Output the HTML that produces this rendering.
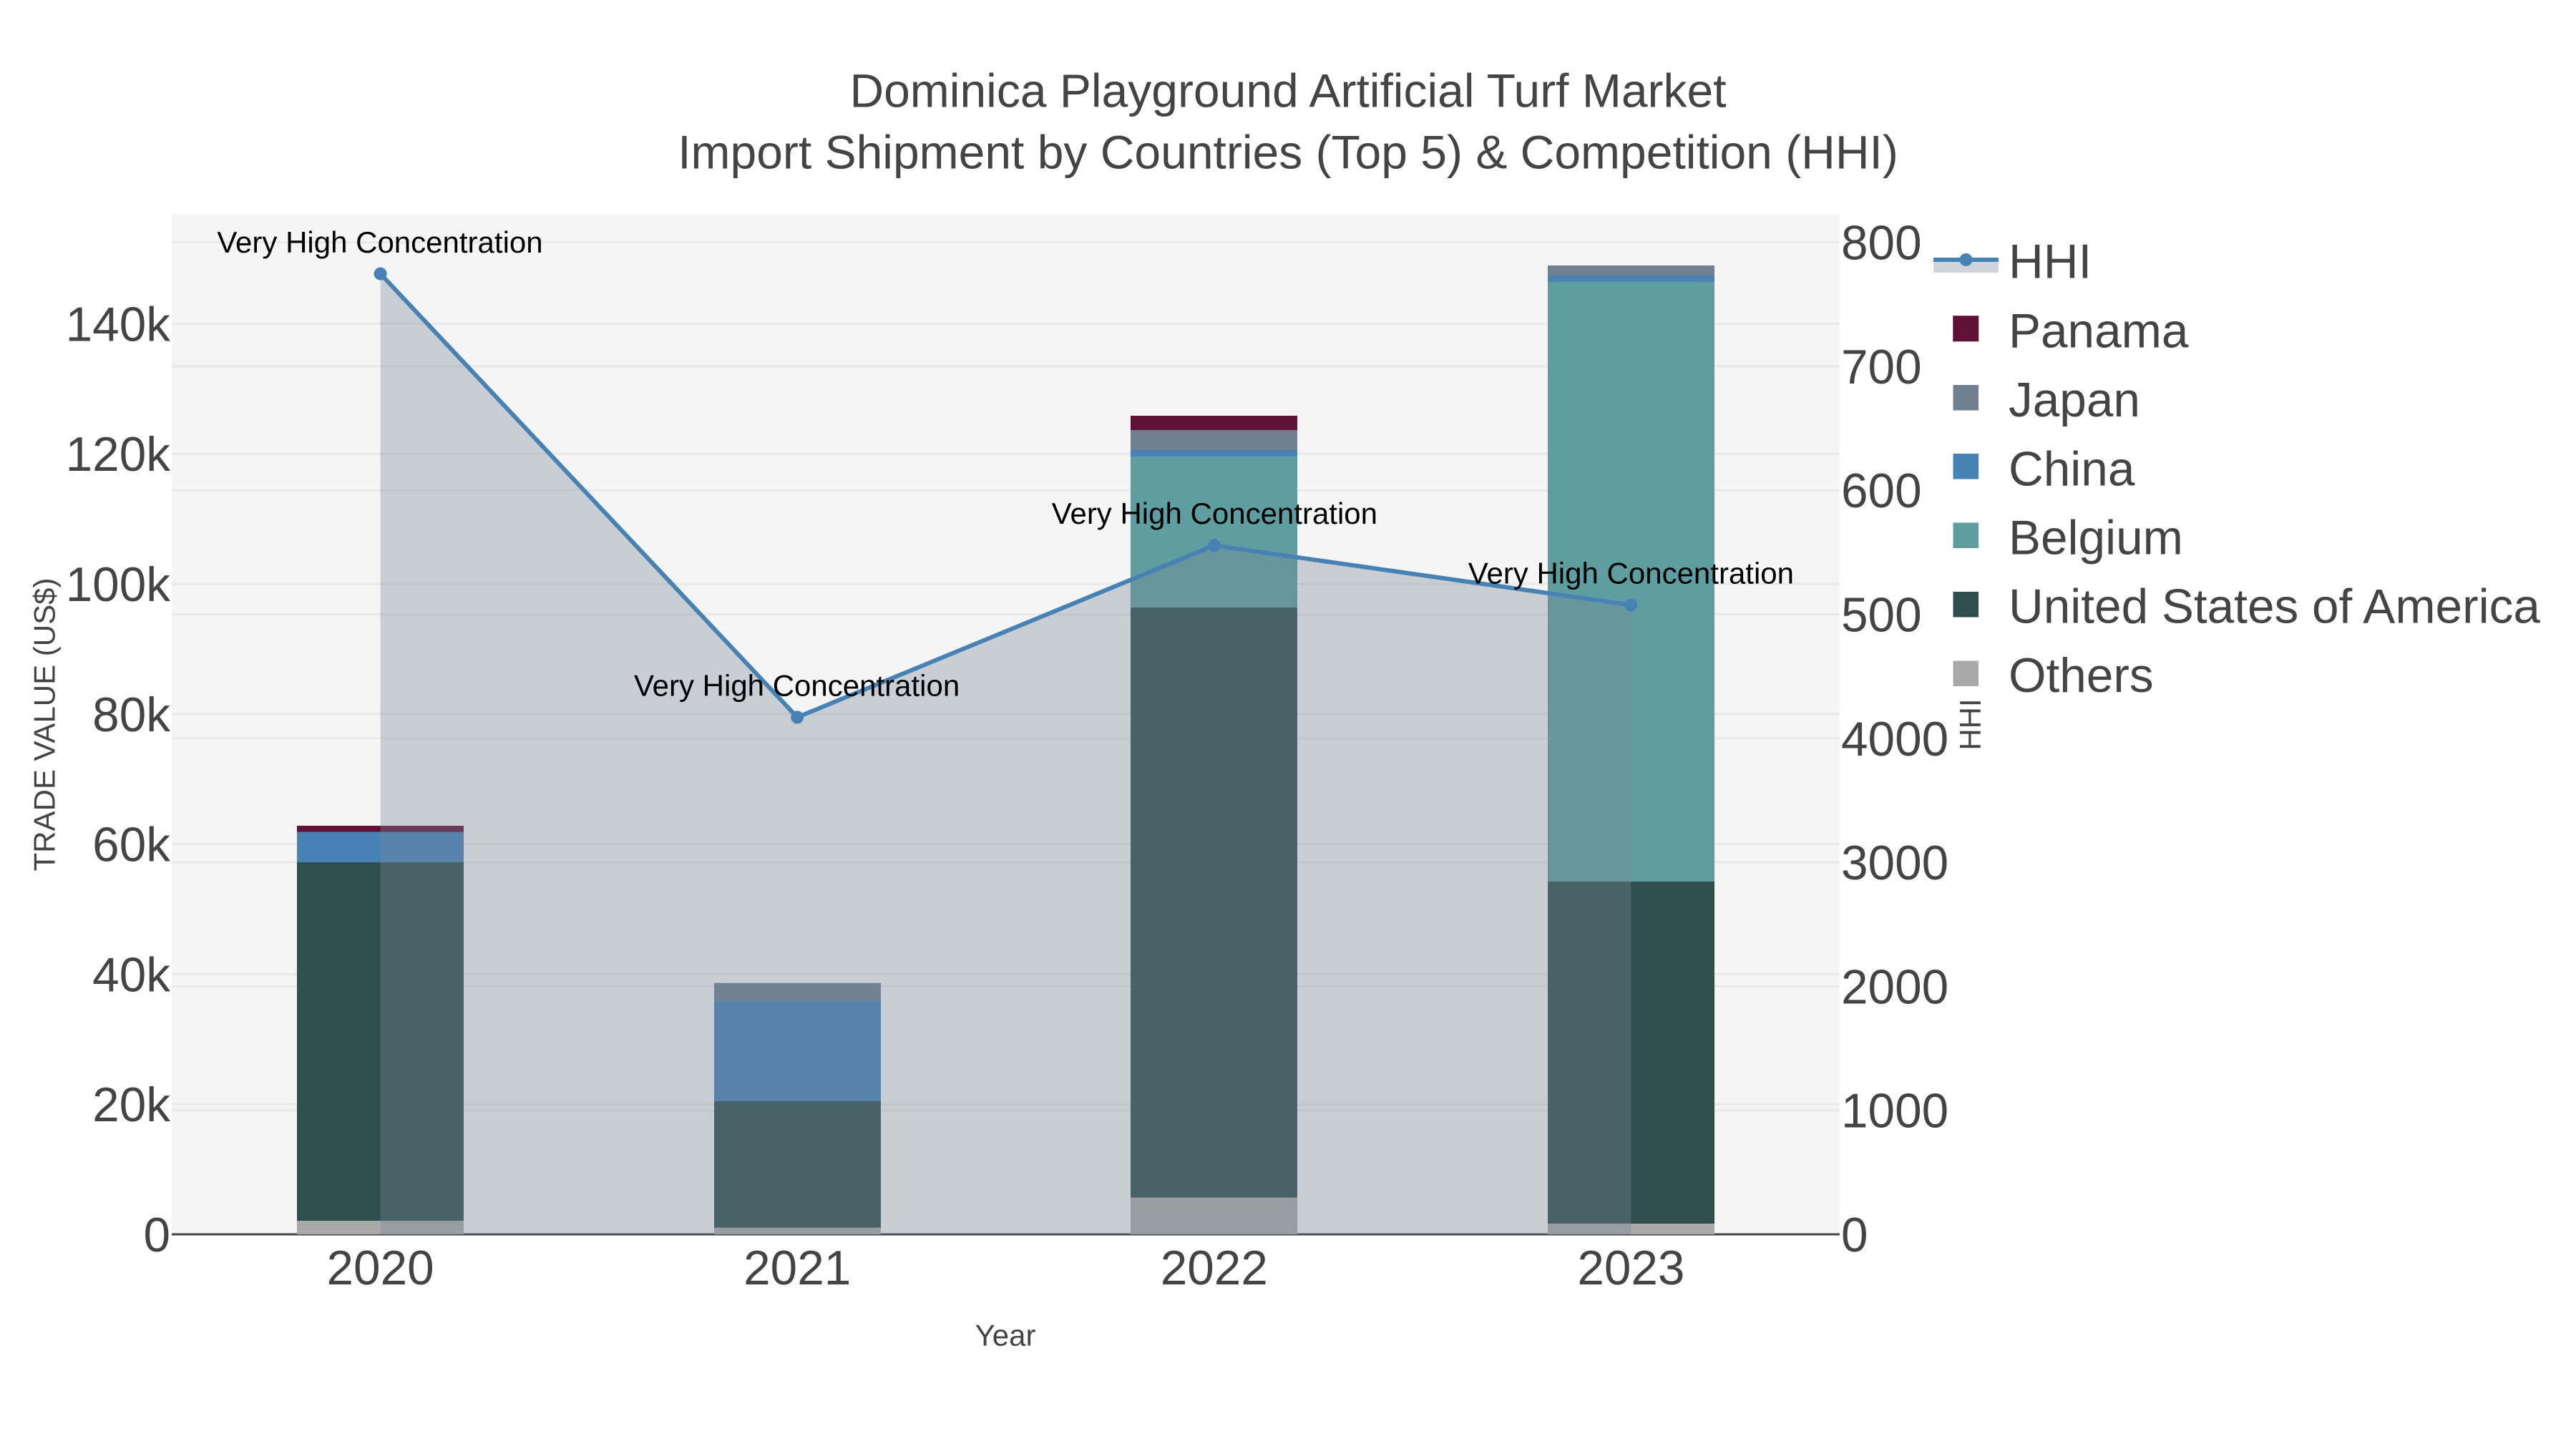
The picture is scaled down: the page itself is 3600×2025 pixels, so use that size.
<!DOCTYPE html>
<html lang="en">
<head>
<meta charset="utf-8">
<title>Dominica Playground Artificial Turf Market</title>
<style>
html,body{margin:0;padding:0;background:#fff;width:3600px;height:2025px;overflow:hidden}
svg{display:block}
text{font-family:"Liberation Sans",Arial,sans-serif;fill:#444}
.t{font-size:66px}
.k{font-size:67.5px}
.a{font-size:42px}
.n{font-size:42px;fill:#000;text-anchor:middle}
.e{text-anchor:end}
.m{text-anchor:middle}
.g line{stroke:#e9e9e9;stroke-width:3}
</style>
</head>
<body>
<svg width="3600" height="2025" viewBox="0 0 3600 2025" xmlns="http://www.w3.org/2000/svg">
<rect width="3600" height="2025" fill="#fff"/>
<rect x="240" y="300" width="2331" height="1425" fill="#f5f5f5"/>

<g class="g">
<line x1="240" x2="2571" y1="1543.2" y2="1543.2"/>
<line x1="240" x2="2571" y1="1361.4" y2="1361.4"/>
<line x1="240" x2="2571" y1="1179.6" y2="1179.6"/>
<line x1="240" x2="2571" y1="997.8" y2="997.8"/>
<line x1="240" x2="2571" y1="816" y2="816"/>
<line x1="240" x2="2571" y1="634.2" y2="634.2"/>
<line x1="240" x2="2571" y1="452.4" y2="452.4"/>
<line x1="240" x2="2571" y1="1551.7" y2="1551.7"/>
<line x1="240" x2="2571" y1="1378.4" y2="1378.4"/>
<line x1="240" x2="2571" y1="1205.1" y2="1205.1"/>
<line x1="240" x2="2571" y1="1031.8" y2="1031.8"/>
<line x1="240" x2="2571" y1="858.5" y2="858.5"/>
<line x1="240" x2="2571" y1="685.2" y2="685.2"/>
<line x1="240" x2="2571" y1="511.9" y2="511.9"/>
<line x1="240" x2="2571" y1="338.6" y2="338.6"/>
</g>
<line x1="240" x2="2571" y1="1725" y2="1725" stroke="#444" stroke-width="3"/>

<!-- 2020 -->
<rect x="415" y="1706" width="233" height="19" fill="#a9a9a9"/>
<rect x="415" y="1205" width="233" height="501" fill="#2f4f4f"/>
<rect x="415" y="1162.7" width="233" height="42.3" fill="#4682b4"/>
<rect x="415" y="1154" width="233" height="8.7" fill="#5f1235"/>
<!-- 2021 -->
<rect x="998" y="1715.7" width="233" height="9.3" fill="#a9a9a9"/>
<rect x="998" y="1539" width="233" height="176.7" fill="#2f4f4f"/>
<rect x="998" y="1399" width="233" height="140" fill="#4682b4"/>
<rect x="998" y="1373.7" width="233" height="25.3" fill="#708090"/>
<!-- 2022 -->
<rect x="1580" y="1673.7" width="233" height="51.3" fill="#a9a9a9"/>
<rect x="1580" y="848.7" width="233" height="825" fill="#2f4f4f"/>
<rect x="1580" y="638.7" width="233" height="210" fill="#5f9ea0"/>
<rect x="1580" y="629" width="233" height="9.7" fill="#4682b4"/>
<rect x="1580" y="601" width="233" height="28" fill="#708090"/>
<rect x="1580" y="581" width="233" height="20" fill="#5f1235"/>
<!-- 2023 -->
<rect x="2163" y="1710" width="233" height="15" fill="#a9a9a9"/>
<rect x="2163" y="1232" width="233" height="478" fill="#2f4f4f"/>
<rect x="2163" y="394" width="233" height="838" fill="#5f9ea0"/>
<rect x="2163" y="385" width="233" height="9" fill="#4682b4"/>
<rect x="2163" y="371" width="233" height="14" fill="#708090"/>

<!-- HHI -->
<polygon points="531.6,382.6 1114.2,1002.4 1696.8,762.3 2279.4,845.5 2279.4,1725 531.6,1725" fill="#778899" fill-opacity="0.35"/>
<polyline points="531.6,382.6 1114.2,1002.4 1696.8,762.3 2279.4,845.5" fill="none" stroke="#4682b4" stroke-width="6" stroke-linejoin="round"/>
<circle cx="531.6" cy="382.6" r="9" fill="#4682b4"/>
<circle cx="1114.2" cy="1002.4" r="9" fill="#4682b4"/>
<circle cx="1696.8" cy="762.3" r="9" fill="#4682b4"/>
<circle cx="2279.4" cy="845.5" r="9" fill="#4682b4"/>

<text class="n" x="531" y="353">Very High Concentration</text>
<text class="n" x="1113.6" y="972.4">Very High Concentration</text>
<text class="n" x="1697.4" y="732">Very High Concentration</text>
<text class="n" x="2279.4" y="815.5">Very High Concentration</text>

<!-- title -->
<text class="t m" x="1800" y="149.6">Dominica Playground Artificial Turf Market</text>
<text class="t m" x="1800" y="235.4">Import Shipment by Countries (Top 5) &amp; Competition (HHI)</text>

<!-- left ticks -->
<text class="k e" x="238" y="1749">0</text>
<text class="k e" x="238" y="1567.2">20k</text>
<text class="k e" x="238" y="1385.4">40k</text>
<text class="k e" x="238" y="1203.6">60k</text>
<text class="k e" x="238" y="1021.8">80k</text>
<text class="k e" x="238" y="840">100k</text>
<text class="k e" x="238" y="658.2">120k</text>
<text class="k e" x="238" y="476.4">140k</text>

<!-- right ticks -->
<text class="k" x="2573" y="1749">0</text>
<text class="k" x="2573" y="1575.7">1000</text>
<text class="k" x="2573" y="1402.4">2000</text>
<text class="k" x="2573" y="1229.1">3000</text>
<text class="k" x="2573" y="1055.8">4000</text>
<text class="k" x="2573" y="882.5">500</text>
<text class="k" x="2573" y="709.2">600</text>
<text class="k" x="2573" y="535.9">700</text>
<text class="k" x="2573" y="362.6">800</text>

<!-- x ticks -->
<text class="k m" x="531.6" y="1795">2020</text>
<text class="k m" x="1114.2" y="1795">2021</text>
<text class="k m" x="1696.8" y="1795">2022</text>
<text class="k m" x="2279.4" y="1795">2023</text>

<!-- axis titles -->
<text class="a m" x="1405" y="1880.7">Year</text>
<text class="a m" transform="translate(76.7 1012.5) rotate(-90)">TRADE VALUE (US$)</text>
<text class="a m" transform="translate(2768 1012.5) rotate(-90)">HHI</text>

<!-- legend -->
<rect x="2702" y="366" width="91" height="15" fill="#778899" fill-opacity="0.35"/>
<line x1="2702" x2="2793" y1="363" y2="363" stroke="#4682b4" stroke-width="6"/>
<circle cx="2747.5" cy="363" r="9" fill="#4682b4"/>
<text class="k" x="2807" y="388.5">HHI</text>

<rect x="2729.5" y="441.5" width="35.5" height="35.5" fill="#5f1235" stroke="#5f1235" stroke-opacity="0.5" stroke-width="1"/>
<text class="k" x="2807" y="485.5">Panama</text>
<rect x="2729.5" y="538" width="35.5" height="35.5" fill="#708090"/>
<text class="k" x="2807" y="582">Japan</text>
<rect x="2729.5" y="634" width="35.5" height="35.5" fill="#4682b4"/>
<text class="k" x="2807" y="678.5">China</text>
<rect x="2729.5" y="730.5" width="35.5" height="35.5" fill="#5f9ea0"/>
<text class="k" x="2807" y="774.5">Belgium</text>
<rect x="2729.5" y="827" width="35.5" height="35.5" fill="#2f4f4f"/>
<text class="k" x="2807" y="870.5">United States of America</text>
<rect x="2729.5" y="923.5" width="35.5" height="35.5" fill="#a9a9a9"/>
<text class="k" x="2807" y="967">Others</text>
</svg>
</body>
</html>
